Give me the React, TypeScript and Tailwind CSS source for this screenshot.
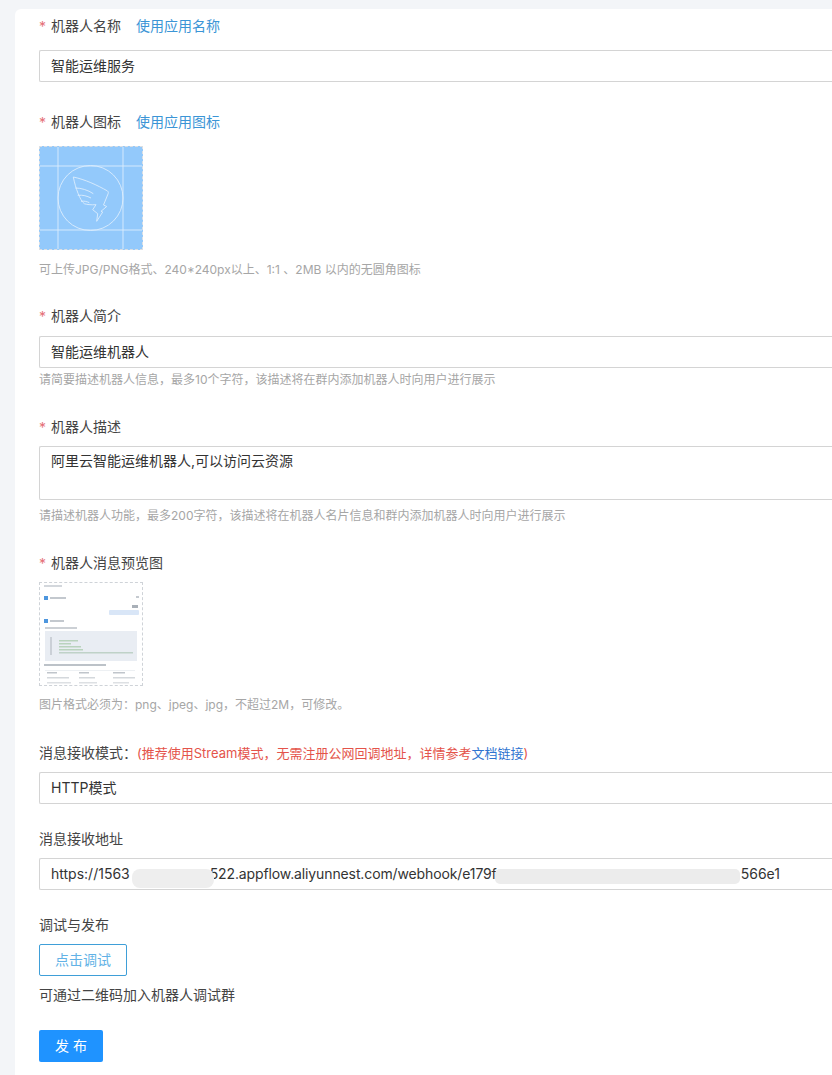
import type { ReactNode } from 'react';

const FONT = "font-['Inter','Noto_Sans_CJK_SC',sans-serif]";

// fullwidth punctuation, kept as escapes so the editor can't flatten it
const COMMA = '\uFF0C';
const COLON = '\uFF1A';

function RequiredLabel({ children, className = '' }: { children: ReactNode; className?: string }) {
  return (
    <div className={`flex h-5 items-center text-sm leading-5 text-[#444] ${className}`}>
      <span className="mr-[5px] w-[7px] translate-y-[1px] text-sm text-[#e56f78]">*</span>
      {children}
    </div>
  );
}

function TextBox({ children, className = '' }: { children: ReactNode; className?: string }) {
  return (
    <div className={`relative flex h-8 items-center rounded-l-[2px] border border-r-0 border-[#d4d4d4] bg-white pl-[11px] text-sm text-[#333] ${className}`}>
      {children}
    </div>
  );
}

function Hint({ children, className = '' }: { children: ReactNode; className?: string }) {
  return <div className={`h-5 text-xs leading-5 text-[#a6a6a6] ${className}`}>{children}</div>;
}

function DingIcon() {
  return (
    <svg viewBox="0 0 104 104" className="h-[104px] w-[104px]" fill="none" stroke="#dcedfd" strokeWidth="0.9">
      <path d="M19 1V103M84 1V103M1 20H103M1 84H103" />
      <circle cx="51.500" cy="52" r="32.500" />
      <path d="M34.300 31C46 33.500 58 39 68.500 45C69.500 45.800 69.500 47 69 48L64.500 59L67.700 60.500L62 65.300L63.700 66L57.700 75.300L58.700 67.700L53.700 63.700L57 58.700C52 59 47.500 58.500 45.300 57.700C41 54.500 36.500 42 34.300 31Z" />
      <path d="M36.300 42C42 42 49 44 54.300 47.700M38.700 49.300C44 48.800 48 50 52 52M42 55.300C45 54.800 48 55.500 50.300 56.700" />
    </svg>
  );
}

function PreviewThumb() {
  return (
    <svg viewBox="0 0 104 104" className="h-[104px] w-[104px]">
      <rect x="5" y="3" width="18" height="2" fill="#d3d7dc" />
      <rect x="5" y="14" width="4" height="4" fill="#4d96de" />
      <rect x="11" y="15" width="16" height="2" fill="#c3c8ce" />
      <rect x="97" y="14" width="3" height="2" fill="#c5cad0" />
      <rect x="93" y="23" width="6" height="3" fill="#a9b0b8" />
      <rect x="70" y="28" width="30" height="5" rx="1" fill="#d9e6f7" />
      <rect x="5" y="37" width="4" height="4" fill="#4d96de" />
      <rect x="11" y="38" width="14" height="2" fill="#c3c8ce" />
      <rect x="6" y="45" width="32" height="2" fill="#ccd0d5" />
      <rect x="6" y="49" width="92" height="30" fill="#e9edf3" />
      <rect x="11" y="55" width="2" height="18" fill="#cbd0d7" />
      <rect x="20" y="58" width="19" height="1.500" fill="#b9d3bd" />
      <rect x="20" y="61" width="12" height="1.500" fill="#b9d3bd" />
      <rect x="20" y="64" width="22" height="1.500" fill="#b9d3bd" />
      <rect x="20" y="67" width="24" height="1.500" fill="#b9d3bd" />
      <rect x="20" y="70" width="74" height="1.500" fill="#bfd2c8" />
      <rect x="5" y="82" width="62" height="2" fill="#bcc2c8" />
      <rect x="6" y="88" width="90" height="1" fill="#edf0f3" />
      <rect x="8" y="90" width="10" height="1.500" fill="#c0c5cb" />
      <rect x="40" y="90" width="10" height="1.500" fill="#c0c5cb" />
      <rect x="74" y="90" width="12" height="1.500" fill="#c0c5cb" />
      <rect x="8" y="95" width="22" height="1.500" fill="#d4d8dc" />
      <rect x="40" y="95" width="16" height="1.500" fill="#d4d8dc" />
      <rect x="74" y="95" width="22" height="1.500" fill="#d4d8dc" />
      <rect x="8" y="100" width="24" height="1.500" fill="#dde0e3" />
      <rect x="40" y="100" width="18" height="1.500" fill="#dde0e3" />
      <rect x="74" y="100" width="16" height="1.500" fill="#dde0e3" />
    </svg>
  );
}

export default function App() {
  return (
    <div className={`h-[1075px] w-[832px] overflow-hidden bg-[#f3f5f8] pl-[15px] pt-[9px] ${FONT}`}>
      <div className="h-[1066px] rounded-tl-[6px] bg-white pl-6 pt-[7px]">
        <RequiredLabel>
          机器人名称
          <span className="ml-[15px] text-[#3b95d6]">使用应用名称</span>
        </RequiredLabel>
        <TextBox className="mt-[14px]">智能运维服务</TextBox>

        <RequiredLabel className="mt-[30px]">
          机器人图标
          <span className="ml-[15px] text-[#3b95d6]">使用应用图标</span>
        </RequiredLabel>
        <div className="mt-[14px] h-[104px] w-[104px] border border-dashed border-[#dcdfe3] bg-[#93c9fb]">
          <div className="-m-px"><DingIcon /></div>
        </div>
        <Hint className="mt-[10px]">可上传JPG/PNG格式、240*240px以上、1:1 、2MB 以内的无圆角图标</Hint>

        <RequiredLabel className="mt-[26px]">机器人简介</RequiredLabel>
        <TextBox className="mt-[10px]">智能运维机器人</TextBox>
        <Hint className="mt-[2px]">
          {`请简要描述机器人信息${COMMA}最多10个字符${COMMA}该描述将在群内添加机器人时向用户进行展示`}
        </Hint>

        <RequiredLabel className="mt-[27px]">机器人描述</RequiredLabel>
        <div className="mt-[9px] h-[54px] rounded-l-[2px] border border-r-0 border-[#d4d4d4] pl-[11px] pt-[4px] text-sm leading-5 text-[#333]">
          阿里云智能运维机器人,可以访问云资源
        </div>
        <Hint className="mt-[6px]">
          {`请描述机器人功能${COMMA}最多200字符${COMMA}该描述将在机器人名片信息和群内添加机器人时向用户进行展示`}
        </Hint>

        <RequiredLabel className="mt-[27px]">机器人消息预览图</RequiredLabel>
        <div className="mt-[9px] h-[104px] w-[104px] overflow-hidden border border-dashed border-[#cfd3d8] bg-white">
          <div className="-m-px blur-[0.5px]"><PreviewThumb /></div>
        </div>
        <Hint className="mt-[9px]">
          {`图片格式必须为${COLON}png、jpeg、jpg${COMMA}不超过2M${COMMA}可修改。`}
        </Hint>

        <div className="mt-[28px] h-5 text-sm leading-5 text-[#444]">
          {`消息接收模式${COLON}`}
          <span className="text-[13px] text-[#e4544b]">
            {`(推荐使用Stream模式${COMMA}无需注册公网回调地址${COMMA}详情参考`}
            <span className="text-[#2f73d0]">文档链接</span>)
          </span>
        </div>
        <TextBox className="mt-[9px]">HTTP模式</TextBox>

        <div className="mt-[25px] h-5 text-sm leading-5 text-[#444]">消息接收地址</div>
        <TextBox className="mt-[9px]">
          <span className="whitespace-nowrap">
            https://1563
            <span className="inline-block w-[80px]" />
            <span className="tracking-[-0.12px]">522.appflow.aliyunnest.com/webhook/e179f</span>
            <span className="inline-block w-[244px]" />
            566e1
          </span>
          <span className="absolute left-[92px] top-[10px] h-[19px] w-[82px] rounded-[8px] bg-[#eeeeee] blur-[0.5px]" />
          <span className="absolute left-[455px] top-[10px] h-[15px] w-[245px] rounded-[5px] bg-[#ececec] blur-[0.5px]" />
        </TextBox>

        <div className="mt-[25px] h-5 text-sm leading-5 text-[#444]">调试与发布</div>
        <button className="mt-[9px] flex h-8 w-[88px] items-center justify-center rounded-[2px] border border-[#3f9fd8] bg-white text-sm text-[#62b2e6]">
          点击调试
        </button>
        <div className="mt-[9px] h-5 text-sm leading-5 text-[#444]">可通过二维码加入机器人调试群</div>
        <button className="mt-[25px] flex h-8 w-16 items-center justify-center rounded-[2px] bg-[#1f93ff] text-sm text-white">
          发 布
        </button>
      </div>
    </div>
  );
}
